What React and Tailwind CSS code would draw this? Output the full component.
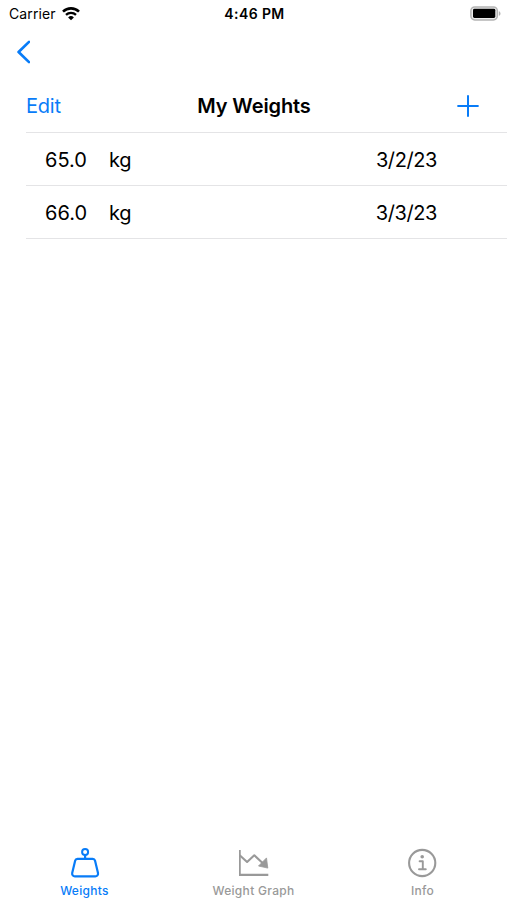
const WifiIcon = () => (
  <svg viewBox="0 0 18 14" className="h-[14px] w-[18px]" fill="none">
    <path d="M1 4.6a11.6 11.6 0 0 1 16 0" stroke="#000" strokeWidth="2.6" />
    <path d="M4 7.9a7.2 7.2 0 0 1 10 0" stroke="#000" strokeWidth="2.3" />
    <path d="M9 13.3 6.1 10.5a4.2 4.2 0 0 1 5.8 0z" fill="#000" />
  </svg>
);

const BatteryIcon = () => (
  <svg viewBox="0 0 31 15" className="h-[15px] w-[31px]" fill="none">
    <rect x="0.9" y="0.9" width="26.4" height="13" rx="3.8" fill="#eee" stroke="#b4b4b4" strokeWidth="1.5" />
    <rect x="3" y="2.8" width="22.3" height="9.2" rx="1.4" fill="#000" />
    <path d="M28.8 5.2c2.3.7 2.3 3.9 0 4.6z" fill="#b4b4b4" />
  </svg>
);

const BackIcon = () => (
  <svg viewBox="0 0 14 24" className="h-6 w-[14px]" fill="none" stroke="currentColor" strokeWidth="2.7">
    <path strokeLinecap="round" strokeLinejoin="round" d="M13 1.9 2.6 12 13 22.1" />
  </svg>
);

const PlusIcon = () => (
  <svg viewBox="0 0 22 22" className="h-[22px] w-[22px]" fill="none" stroke="currentColor" strokeWidth="2">
    <path strokeLinecap="round" d="M11 1.1v19.8M1.1 11h19.8" />
  </svg>
);

const WeightIcon = () => (
  <svg viewBox="0 0 30 32" className="h-8 w-[30px]" fill="none" stroke="currentColor" strokeWidth="2.2">
    <circle cx="15.1" cy="5.1" r="3" strokeWidth="2" />
    <path d="M15.1 8v3.8" />
    <path strokeLinejoin="round" d="M7.5 11.8h15.2a2.4 2.4 0 0 1 2.3 1.8l3 12.4a2.8 2.8 0 0 1-2.7 3.4H4.9a2.8 2.8 0 0 1-2.7-3.4l3-12.4a2.4 2.4 0 0 1 2.3-1.8z" />
  </svg>
);

const GraphIcon = () => (
  <svg viewBox="0 0 30 32" className="h-8 w-[30px]" fill="none" stroke="currentColor" strokeWidth="2.1">
    <path d="M.7 3v24.9h28.6" />
    <path strokeLinejoin="round" d="m.7 8.2 7.4 6.8 7.2-6.7 9.1 8.4" />
    <path d="m27.5 10.9-8 8.1 9.3 2.1z" fill="currentColor" strokeWidth="0.8" strokeLinejoin="round" />
  </svg>
);

const InfoIcon = () => (
  <svg viewBox="0 0 30 32" className="h-8 w-[30px]" fill="none" stroke="currentColor" strokeWidth="2.1">
    <circle cx="14.2" cy="16" r="13.1" />
    <circle cx="14.2" cy="9.7" r="1.8" fill="currentColor" stroke="none" />
    <path strokeLinecap="round" strokeLinejoin="round" d="M11.6 14.3h3.2v7.8M11 22.2h6.8" strokeWidth="1.9" />
  </svg>
);

const weights = [
  { value: '65.0', unit: 'kg', date: '3/2/23' },
  { value: '66.0', unit: 'kg', date: '3/3/23' },
];

const tabs = [
  { label: 'Weights', Icon: WeightIcon, active: true },
  { label: 'Weight Graph', Icon: GraphIcon },
  { label: 'Info', Icon: InfoIcon },
];

const StatusBar = () => (
  <div className="grid h-[27px] grid-cols-3 items-center pl-[9px] pr-[6px] text-[14px] leading-none">
    <div className="flex items-center gap-[6px]">
      <span className="tracking-[0.1px]">Carrier</span>
      <WifiIcon />
    </div>
    <span className="pr-px text-center text-[14px] font-semibold tracking-[0.4px]">4:46 PM</span>
    <div className="flex justify-end">
      <BatteryIcon />
    </div>
  </div>
);

const WeightRow = ({ value, unit, date }) => (
  <li className="flex h-[53px] items-center border-b border-[#e4e4e6] pl-[19px] pr-[70px] pt-[2px] text-[20px] leading-none">
    <span className="w-[64px]">{value}</span>
    <span className="tracking-[-0.2px]">{unit}</span>
    <span className="ml-auto tracking-[-0.4px]">{date}</span>
  </li>
);

const App = () => (
  <div className="flex h-screen w-full flex-col bg-white font-['Inter',sans-serif] text-black">
    <StatusBar />

    <div className="flex h-[51px] items-center pb-[2px] pl-4 text-[#087cf8]">
      <button aria-label="Back">
        <BackIcon />
      </button>
    </div>

    <main className="flex-1 pl-[26px]">
      <div className="grid h-[55px] grid-cols-3 items-center border-b border-[#e4e4e6] pr-[28px] pt-[2px] text-[20px] leading-none">
        <button className="justify-self-start tracking-[-0.2px] text-[#087cf8]">Edit</button>
        <h1 className="pl-[3px] text-center font-semibold tracking-[-0.1px]">My Weights</h1>
        <button aria-label="Add weight" className="justify-self-end text-[#087cf8]">
          <PlusIcon />
        </button>
      </div>
      <ul>
        {weights.map((w) => (
          <WeightRow key={w.date} {...w} />
        ))}
      </ul>
    </main>

    <nav className="grid h-[53px] grid-cols-3">
      {tabs.map(({ label, Icon, active }) => (
        <button
          key={label}
          className={`flex flex-col items-center gap-[6px] text-[12px] font-medium leading-none tracking-[0.3px] ${active ? 'text-[#087cf8]' : 'text-[#999]'}`}
        >
          <Icon />
          <span>{label}</span>
        </button>
      ))}
    </nav>
  </div>
);

export default App;
